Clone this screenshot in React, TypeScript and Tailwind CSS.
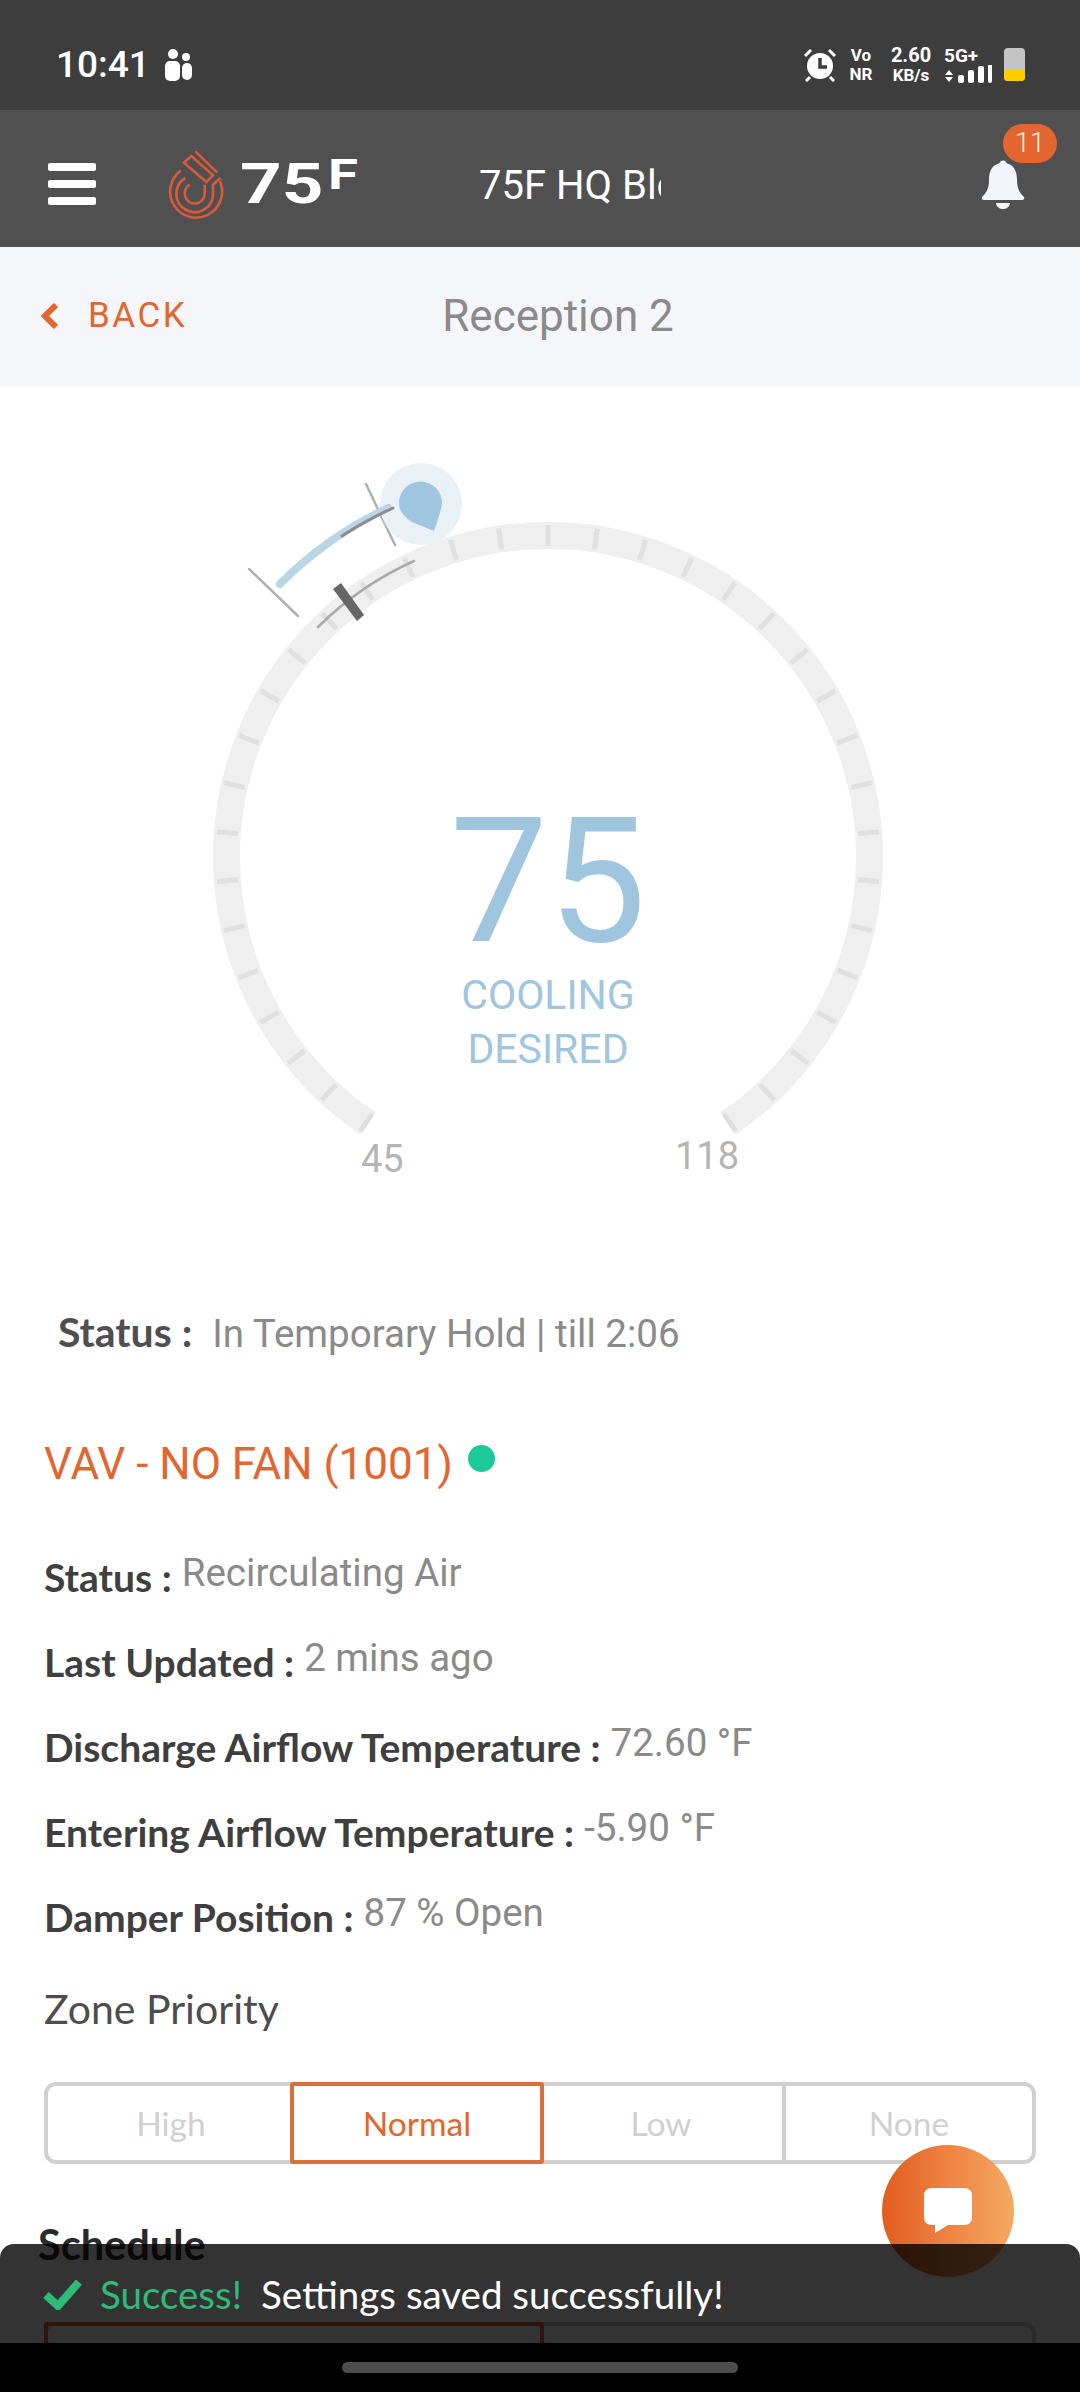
const CX = 548;
const CY = 471; // dial centre inside the dial block (block starts at y=386)

function polar(r: number, deg: number) {
  const a = (deg * Math.PI) / 180;
  return { x: CX + r * Math.sin(a), y: CY - r * Math.cos(a) };
}

function arc(r: number, from: number, to: number) {
  const s = polar(r, from);
  const e = polar(r, to);
  const large = Math.abs(to - from) > 180 ? 1 : 0;
  return `M${s.x} ${s.y} A${r} ${r} 0 ${large} 1 ${e.x} ${e.y}`;
}

const ticks = Array.from({ length: 35 }, (_, i) => (i - 17) * 8.565);

function Dial() {
  return (
    <div className="relative h-[922px] w-full">
      <svg width="1080" height="850" className="block" fill="none">
        <path d={arc(321.5, -146, 146)} stroke="#efefef" strokeWidth="27" />
        {ticks.map((t) => {
          const a = polar(311, t);
          const b = polar(332, t);
          return <line key={t} x1={a.x} y1={a.y} x2={b.x} y2={b.y} stroke="#e0e0e0" strokeWidth="5" />;
        })}
        <path d="M318 241 A325 325 0 0 1 414 175" stroke="#aaaaaa" strokeWidth="2.5" strokeLinecap="round" />
        <polygon points="333,203 341,197 364,229 357,235" fill="#666666" />
        <line x1="249" y1="183" x2="298" y2="230" stroke="#b0b0b0" strokeWidth="2.5" strokeLinecap="round" />
        <line x1="366" y1="98" x2="395" y2="159" stroke="#b0b0b0" strokeWidth="2.5" strokeLinecap="round" />
        <circle cx="421" cy="118" r="41" fill="#e9f1f7" />
        <path d="M280 198 A382 382 0 0 1 388 122" stroke="#b9d5e6" strokeWidth="8" strokeLinecap="round" />
        <path d="M342 150 A380 380 0 0 1 393 122" stroke="#8c8c8c" strokeWidth="3" strokeLinecap="round" />
        <path d="M434 145 L412 136 Q399 128 399 117 A21.5 21.5 0 0 1 442 117 Q442 122 434 145 Z" fill="#a0c5de" />
      </svg>
      <div className="absolute left-[16px] right-0 top-[410px] flex flex-col items-center font-['Roboto',sans-serif] text-[#a0c5de]">
        <div className="text-[175px] leading-[172px]">75</div>
        <div className="text-[41px] leading-[54px]">COOLING</div>
        <div className="text-[41px] leading-[54px]">DESIRED</div>
      </div>
      <div className="absolute left-[361px] top-[749px] font-['Roboto',sans-serif] text-[38px] leading-[48px] text-[#b5b5b5]">45</div>
      <div className="absolute left-[675px] top-[746px] font-['Roboto',sans-serif] text-[38px] leading-[48px] text-[#b5b5b5]">118</div>
    </div>
  );
}

function Logo() {
  return (
    <svg width="70" height="84" viewBox="0 0 210 252" fill="none" stroke="#d65a3b" strokeWidth="8">
      <path d="M68 86 A78 78 0 1 0 186 118" />
      <path d="M82 108 A55 55 0 1 0 165 155 L165 128 L188 108" />
      <path d="M96 128 A30 30 0 1 0 140 155 L140 128" />
      <path d="M78 62 L100 42 L165 100 L145 120 Z" />
      <path d="M112 28 L178 92" />
    </svg>
  );
}

function StatusBar() {
  return (
    <div className="flex h-[110px] items-center bg-[#3d3d3d] pl-[56px] pr-[55px] pt-[19px] font-['Roboto',sans-serif] text-white">
      <span className="w-[109px] text-[37px] font-medium leading-none">10:41</span>
      <svg width="30" height="32" viewBox="0 0 30 32" fill="#fff">
        <circle cx="8" cy="5" r="5" />
        <circle cx="21" cy="8" r="4" />
        <rect x="0" y="12" width="15" height="20" rx="5" />
        <rect x="17" y="14" width="10" height="17" rx="5" />
      </svg>
      <div className="ml-auto flex h-[34px] items-center">
        <svg width="32" height="34" viewBox="0 0 32 34" fill="none" stroke="#fff">
          <circle cx="16" cy="18" r="13" fill="#fff" stroke="none" />
          <path d="M16 10 V19 H23" stroke="#3d3d3d" strokeWidth="3.5" />
          <path d="M1 8 L7 2 M31 8 L25 2 M6 29 L2 33 M26 29 L30 33" strokeWidth="3" />
        </svg>
        <div className="ml-[12px] flex w-[26px] flex-col items-center text-[17px] font-bold leading-[19px]">
          <span>Vo</span>
          <span>NR</span>
        </div>
        <div className="ml-[17px] flex w-[40px] flex-col items-center font-bold">
          <span className="text-[20px] leading-[21px]">2.60</span>
          <span className="text-[17px] leading-[19px]">KB/s</span>
        </div>
        <div className="ml-[13px] flex w-[48px] flex-col items-start">
          <span className="text-[19px] font-bold leading-[18px]">5G+</span>
          <svg width="48" height="18" viewBox="0 0 48 18" fill="#fff">
            <path d="M5 5 L9 10 H1 Z M5 17 L1 12 H9 Z" />
            <rect x="14" y="10" width="6" height="8" rx="2" />
            <rect x="24" y="5" width="6" height="13" rx="2" />
            <rect x="34" y="1" width="6" height="17" rx="2" />
            <rect x="44" y="-4" width="4" height="22" rx="2" />
          </svg>
        </div>
        <div className="ml-[12px] flex h-[33px] w-[21px] flex-col overflow-hidden rounded-[4px] bg-[#c4c4c4]">
          <div className="mt-auto h-[11px] bg-[#ffcd00]" />
        </div>
      </div>
    </div>
  );
}

function Header() {
  return (
    <div className="flex h-[137px] items-center bg-[#505050] pt-[11px] font-['Roboto',sans-serif] text-white">
      <div className="ml-[48px] flex w-[48px] flex-col gap-[9px]">
        <div className="h-[8px] rounded-[2px] bg-white" />
        <div className="h-[8px] rounded-[2px] bg-white" />
        <div className="h-[8px] rounded-[2px] bg-white" />
      </div>
      <div className="ml-[62px]">
        <Logo />
      </div>
      <div className="flex w-[125px] items-start">
        <span className="ml-[12px] origin-left scale-x-[1.3] text-[56px] font-bold leading-[56px]">75</span>
        <span className="ml-[24px] mt-[-6px] origin-left scale-x-[1.3] text-[42px] font-bold leading-[50px]">F</span>
      </div>
      <div className="ml-[126px] mt-[4px] w-[182px] overflow-hidden whitespace-nowrap text-[40px] leading-none">75F HQ Block</div>
      <div className="relative ml-auto mr-[55px] mt-[2px]">
        <svg width="44" height="50" viewBox="0 0 44 50" fill="#f3f5fa">
          <circle cx="22" cy="4" r="3.5" />
          <path d="M22 3 C11 3 8 11 8 20 C8 29 5 33 1 37 Q0 40 3 40 H41 Q44 40 43 37 C39 33 36 29 36 20 C36 11 33 3 22 3 Z" />
          <path d="M15 43 H29 C28 51 16 51 15 43 Z" />
        </svg>
        <div className="absolute left-[22px] top-[-36px] flex h-[39px] w-[54px] items-center justify-center rounded-full bg-[#e3652f] text-[27px] font-light text-[#fdeee6]">11</div>
      </div>
    </div>
  );
}

function InfoRow({ label, value }: { label: string; value: string }) {
  return (
    <div className="flex h-[85px] items-start">
      <span className="text-[39px] font-bold leading-[48px] text-[#3f3f3f]">{label}</span>
      <span className="ml-[10px] font-['Roboto',sans-serif] text-[38.5px] leading-[39px] text-[#8a8a8a]">{value}</span>
    </div>
  );
}

const rows = [
  ["Status :", "Recirculating Air"],
  ["Last Updated :", "2 mins ago"],
  ["Discharge Airflow Temperature :", "72.60 °F"],
  ["Entering Airflow Temperature :", "-5.90 °F"],
  ["Damper Position :", "87 % Open"],
];

export default function App() {
  return (
    <div className="relative h-[2392px] w-[1080px] overflow-hidden bg-white font-['Lato',sans-serif]">
      <StatusBar />
      <Header />
      <div className="flex h-[139px] items-center bg-[#f4f6fa] pb-[2px] font-['Roboto',sans-serif]">
        <svg width="18" height="26" viewBox="0 0 18 26" className="ml-[41px]" fill="none" stroke="#e3652f" strokeWidth="6">
          <path d="M15 2 L4 13 L15 24" />
        </svg>
        <span className="ml-[29px] mt-[2px] text-[35px] tracking-[2.5px] text-[#e3652f]">BACK</span>
        <span className="ml-[255px] text-[44px] text-[#8a8a8a]">Reception 2</span>
      </div>
      <Dial />
      <div className="flex items-baseline pl-[58px]">
        <span className="text-[41px] font-bold leading-[48px] text-[#4f4f4f]">Status :</span>
        <span className="ml-[20px] font-['Roboto',sans-serif] text-[38.5px] leading-[48px] text-[#8a8a8a]">In Temporary Hold | till 2:06</span>
      </div>
      <div className="pl-[44px] pr-[44px]">
        <div className="mt-[79px] flex items-start">
          <span className="font-['Roboto',sans-serif] text-[44px] leading-[54px] text-[#e3652f]">VAV - NO FAN (1001)</span>
          <span className="ml-[15px] mt-[8px] h-[27px] w-[27px] rounded-full bg-[#1cc99a]" />
        </div>
        <div className="mt-[62px]">
          {rows.map(([label, value]) => (
            <InfoRow key={label} label={label} value={value} />
          ))}
        </div>
        <div className="mt-[7px] text-[41px] leading-[48px] text-[#4d4d4d]">Zone Priority</div>
        <div className="mt-[49px] grid h-[82px] w-[992px] grid-cols-4 rounded-[12px] border-[4px] border-[#d0d0d0] text-[33.5px] text-[#d0d0d0]">
          <div className="flex items-center justify-center">High</div>
          <div className="m-[-4px] flex items-center justify-center rounded-[3px] border-[4px] border-[#df6c3d] text-[#e3652f]">Normal</div>
          <div className="flex items-center justify-center border-r-[4px] border-[#d0d0d0]">Low</div>
          <div className="flex items-center justify-center">None</div>
        </div>
        <div className="ml-[-6px] mt-[56px] text-[41.5px] font-bold leading-[48px] text-[#2a2a2a]">Schedule</div>
        <div className="mt-[54px] grid h-[82px] w-[992px] grid-cols-2 rounded-[12px] border-[4px] border-[#d0d0d0]">
          <div className="m-[-4px] rounded-[3px] border-[4px] border-[#df6c3d]" />
        </div>
      </div>

      <div className="absolute left-[882px] top-[2145px] flex h-[132px] w-[132px] items-center justify-center rounded-full bg-linear-to-r from-[#e35b1c] to-[#f5a862]">
        <svg width="48" height="46" viewBox="0 0 48 46" fill="#fff">
          <path d="M8 0 H40 Q48 0 48 8 V29 Q48 37 40 37 H24 L11 45 L11 37 H8 Q0 37 0 29 V8 Q0 0 8 0 Z" />
        </svg>
      </div>

      <div className="absolute bottom-[49px] left-0 right-0 flex h-[99px] items-start rounded-t-[14px] bg-black/80 pl-[43px] pt-[28px] text-[38.5px] leading-[44px]">
        <svg width="40" height="30" viewBox="0 0 40 30" className="mt-[8px]" fill="none" stroke="#2cbc78" strokeWidth="8">
          <path d="M3 15 L15 26 L36 2" />
        </svg>
        <span className="ml-[17px] text-[#2fbb7a]">Success!</span>
        <span className="ml-[19px] text-white">Settings saved successfully!</span>
      </div>

      <div className="absolute bottom-0 left-0 right-0 flex h-[49px] items-start justify-center bg-black pt-[19px]">
        <div className="h-[11px] w-[396px] rounded-full bg-[#4d4d4d]" />
      </div>
    </div>
  );
}
